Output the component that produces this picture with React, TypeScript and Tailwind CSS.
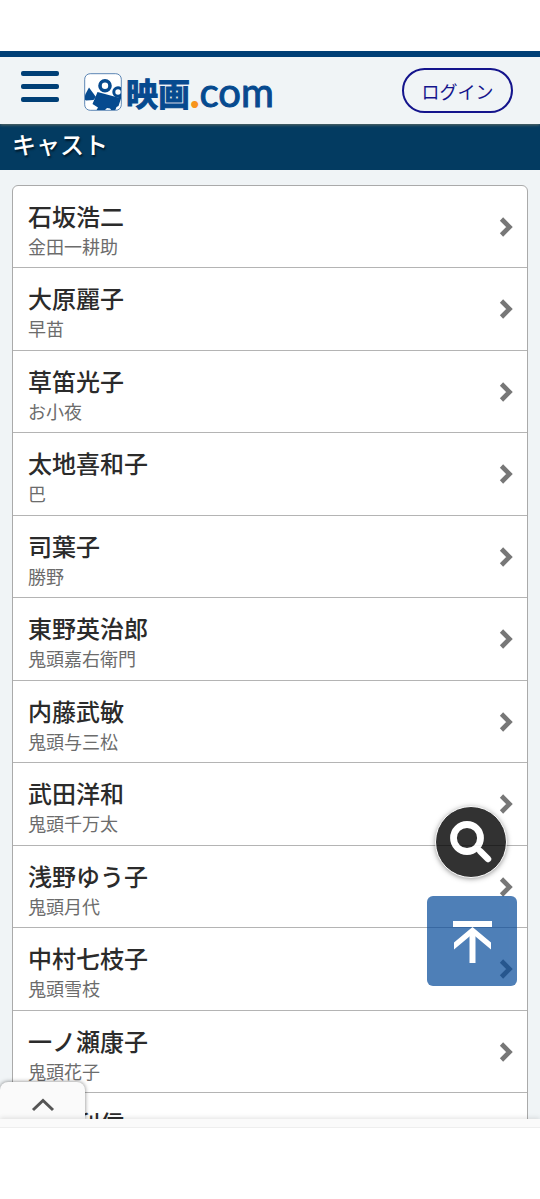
import React from 'react';

const cast = [
  { name: '石坂浩二', role: '金田一耕助' },
  { name: '大原麗子', role: '早苗' },
  { name: '草笛光子', role: 'お小夜' },
  { name: '太地喜和子', role: '巴' },
  { name: '司葉子', role: '勝野' },
  { name: '東野英治郎', role: '鬼頭嘉右衛門' },
  { name: '内藤武敏', role: '鬼頭与三松' },
  { name: '武田洋和', role: '鬼頭千万太' },
  { name: '浅野ゆう子', role: '鬼頭月代' },
  { name: '中村七枝子', role: '鬼頭雪枝' },
  { name: '一ノ瀬康子', role: '鬼頭花子' },
  { name: '佐分利信', role: '' },
];

function CameraIcon() {
  return (
    <svg viewBox="0 0 38 38" className="h-[38px] w-[38px]" aria-hidden="true">
      <defs>
        <clipPath id="logo-frame">
          <rect x="1" y="1" width="36" height="36" rx="5" />
        </clipPath>
      </defs>
      <rect x="0.7" y="0.7" width="36.6" height="36.6" rx="5.5" fill="#fff" stroke="#5d86b4" strokeWidth="1" />
      <g clipPath="url(#logo-frame)">
        <path d="M0 26 L1.5 21 L5 14.5 L12 24 L9.5 27 L2 27.5 Z" fill="#064a8f" />
        <path
          d="M13.5 19 L34 24.5 L38 22.5 L34.5 33 L32.5 34 L31 38 L28 38 L26 35.5 L23 35 L20 38 L12 38 L14 34.5 L8.5 31 Z"
          fill="#064a8f"
        />
        <circle cx="21" cy="12.8" r="5" fill="#fff" stroke="#064a8f" strokeWidth="3.6" />
        <circle cx="34" cy="19" r="4.2" fill="#fff" stroke="#064a8f" strokeWidth="3" />
      </g>
    </svg>
  );
}

function Header() {
  return (
    <header className="relative z-10 flex h-[73px] shrink-0 items-center border-t-6 border-[#003f76] bg-[#f0f4f6] pr-[27px] pl-[21px] shadow-[0_1px_3px_rgba(120,120,100,0.8)]">
      <button type="button" aria-label="メニュー" className="mb-2 flex flex-col gap-2">
        <span className="h-[5px] w-[38px] rounded-xs bg-[#003f76]" />
        <span className="h-[5px] w-[38px] rounded-xs bg-[#003f76]" />
        <span className="h-[5px] w-[38px] rounded-xs bg-[#003f76]" />
      </button>
      <a href="#" className="ml-[25px] flex items-center pt-0.5 whitespace-nowrap text-[#064a8f]">
        <CameraIcon />
        <span className="ml-1 text-[32px] leading-10 font-bold [-webkit-text-stroke:1px_#064a8f]">映画</span>
        <span className="font-['Lato',sans-serif] text-[40px] leading-10 [-webkit-text-stroke:1px_#064a8f]">
          <span className="text-[#f7941d] [-webkit-text-stroke:2px_#f7941d]">.</span>com
        </span>
      </a>
      <button
        type="button"
        className="ml-auto h-[45px] w-[111px] rounded-full border-2 border-[#14148c] text-lg text-[#14148c]"
      >
        ログイン
      </button>
    </header>
  );
}

function Chevron() {
  return (
    <svg viewBox="0 0 14 20" className="h-5 w-3.5 shrink-0" aria-hidden="true">
      <path d="M2.5 2 L10.5 10 L2.5 18" fill="none" stroke="#777" strokeWidth="4.6" />
    </svg>
  );
}

function CastList() {
  return (
    <ul className="mx-3 mt-[15px] rounded-md border border-[#aaa] bg-white">
      {cast.map((person) => (
        <li key={person.name} className="border-b border-[#b4b4b4] odd:h-[82px] even:h-[83px]">
          <a href="#" className="flex h-full items-center justify-between pr-[14px] pl-[15px]">
            <div className="pt-1.5">
              <p className="text-2xl leading-8 font-medium text-[#2b2b2b]">{person.name}</p>
              <p className="min-h-7 text-lg leading-7 text-[#6c6c6c]">{person.role}</p>
            </div>
            <Chevron />
          </a>
        </li>
      ))}
    </ul>
  );
}

export default function App() {
  return (
    <div className="flex h-screen flex-col bg-white pt-[51px] font-['Noto_Sans_CJK_JP',sans-serif]">
      <div className="relative flex min-h-0 flex-1 flex-col overflow-hidden bg-[#f0f4f6]">
        <Header />
        <h2 className="h-[46px] shrink-0 bg-[#033b61] pl-3 text-2xl leading-10 font-medium text-white [text-shadow:1px_2px_2px_rgba(0,0,0,0.6)]">
          キャスト
        </h2>
        <main>
          <CastList />
        </main>

        <button
          type="button"
          aria-label="検索"
          className="absolute right-[33px] bottom-[241px] flex h-[72px] w-[72px] items-center justify-center rounded-full border border-white bg-black opacity-80 shadow-[0_1px_5px_rgba(0,0,0,0.5)]"
        >
          <svg viewBox="0 0 70 70" className="h-[70px] w-[70px]" fill="none" stroke="#fff" aria-hidden="true">
            <circle cx="31" cy="31" r="13.5" strokeWidth="6.8" />
            <path d="M41 41 L44 44" strokeWidth="5" />
            <path d="M44.5 44.5 L52 52" strokeWidth="6.5" strokeLinecap="round" />
          </svg>
        </button>
        <button
          type="button"
          aria-label="ページの先頭へ"
          className="absolute right-[23px] bottom-[133px] h-[90px] w-[90px] rounded-md bg-[#044999] opacity-70"
        >
          <svg viewBox="0 0 90 90" className="h-full w-full" fill="#fff" aria-hidden="true">
            <path d="M26 25 H65 V31 H26 Z" />
            <path d="M42.5 34 H48.5 V67 H42.5 Z" />
            <path d="M45.5 31 L64 46.5 V53.5 L45.5 38 L27 53.5 V46.5 Z" />
          </svg>
        </button>
        <button
          type="button"
          aria-label="開く"
          className="absolute bottom-0 left-0 flex h-[37px] w-[85px] items-center justify-center rounded-t-lg bg-[#fafafa] pt-2 shadow-[0_0_4px_rgba(0,0,0,0.5)]"
        >
          <svg viewBox="0 0 24 14" className="h-3.5 w-6" fill="none" stroke="#555" strokeWidth="3" aria-hidden="true">
            <path d="M2 12 L12 2.5 L22 12" />
          </svg>
        </button>
      </div>
      <footer className="relative h-20 shrink-0 shadow-[0_-1px_5px_rgba(0,0,0,0.12)]">
        <div className="h-[9px] border-b border-[#eee] bg-[#fafafa]" />
        <div className="h-[71px] bg-white" />
      </footer>
    </div>
  );
}
